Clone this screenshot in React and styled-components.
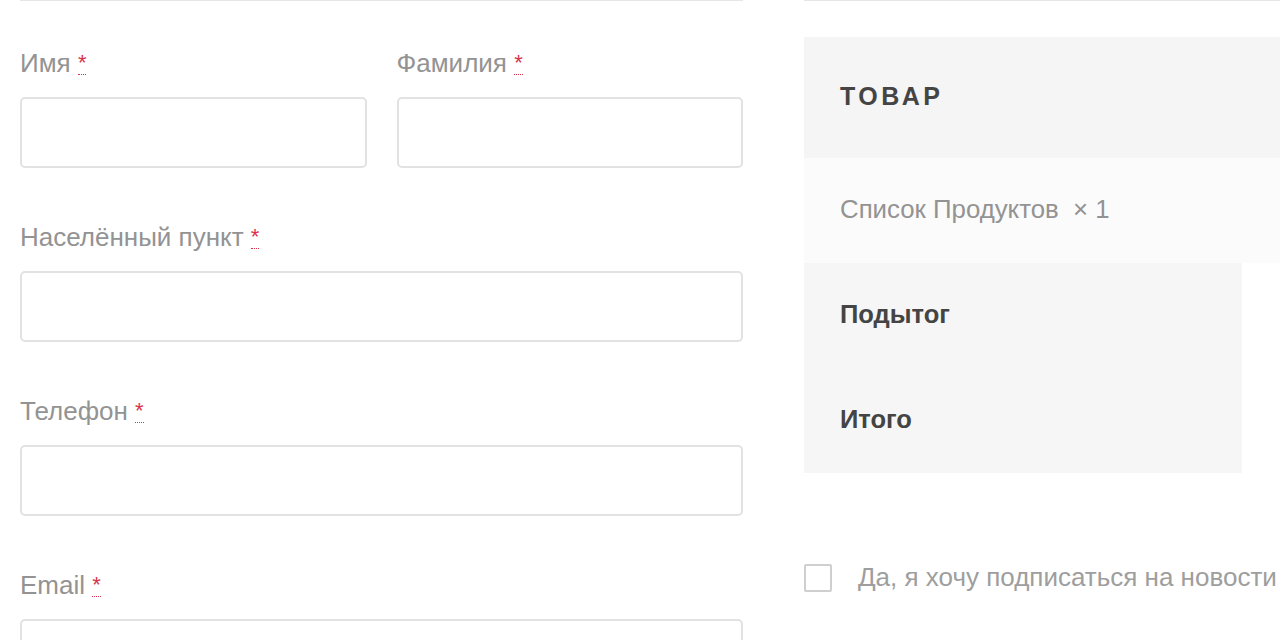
import React from 'react';
import styled, { createGlobalStyle } from 'styled-components';

const GlobalStyle = createGlobalStyle`
  html, body {
    margin: 0;
    padding: 0;
    background: #fff;
    overflow: hidden;
  }
  body {
    font-family: "Liberation Sans", Arial, sans-serif;
  }
`;

const Page = styled.div`
  display: flex;
  gap: 61px;
  padding-left: 20px;
  width: 1400px;
  height: 640px;
`;

const FormColumn = styled.section`
  width: 723px;
  flex-shrink: 0;
  border-top: 1px solid #e6e6e6;
  padding-top: 45px;
`;

const Row = styled.div`
  display: flex;
  gap: 30px;
`;

const Field = styled.div`
  flex: 1;
  margin-bottom: 52px;
`;

const Label = styled.label`
  display: block;
  height: 34px;
  font-size: 26px;
  line-height: 34px;
  color: #939393;
  margin-bottom: 17px;
  white-space: nowrap;
`;

const Required = styled.abbr`
  display: inline-block;
  line-height: 1;
  color: #d8334a;
  text-decoration: none;
  border-bottom: 1px dotted #d8334a;
  font-size: 22px;
  vertical-align: 2px;
`;

const Input = styled.input`
  display: block;
  box-sizing: border-box;
  width: 100%;
  height: 71px;
  border: 2px solid #e2e2e2;
  border-radius: 5px;
  background: #fff;
  outline: none;
`;

const OrderColumn = styled.section`
  width: 560px;
  flex-shrink: 0;
  border-top: 1px solid #e6e6e6;
  padding-top: 36px;
`;

const HeadRow = styled.div`
  height: 121px;
  display: flex;
  align-items: center;
  padding-left: 36px;
  padding-bottom: 3px;
  box-sizing: border-box;
  background: #f5f5f5;
  font-size: 25px;
  font-weight: 700;
  letter-spacing: 3.6px;
  color: #444;
`;

const ItemRow = styled.div`
  height: 105px;
  display: flex;
  align-items: center;
  padding-left: 36px;
  padding-bottom: 2px;
  box-sizing: border-box;
  background: #fbfbfb;
  font-size: 25.8px;
  color: #939393;
  white-space: pre;
`;

const Totals = styled.div`
  width: 438px;
  background: #f6f6f6;
`;

const TotalRow = styled.div`
  height: 105px;
  display: flex;
  align-items: center;
  padding-left: 36px;
  padding-bottom: 2px;
  box-sizing: border-box;
  font-size: 25.5px;
  font-weight: 700;
  color: #444;
`;

const Subscribe = styled.label`
  display: flex;
  align-items: center;
  gap: 26px;
  margin-top: 89px;
  font-size: 26px;
  color: #9e9e9e;
  white-space: nowrap;
`;

const Box = styled.span`
  display: block;
  box-sizing: border-box;
  width: 28px;
  height: 28px;
  border: 2px solid #cfcfcf;
  border-radius: 2px;
  background: #fff;
`;

function Star() {
  return <Required title="обязательно">*</Required>;
}

export default function App() {
  return (
    <>
      <GlobalStyle />
      <Page>
        <FormColumn>
          <Row>
            <Field>
              <Label>Имя <Star /></Label>
              <Input />
            </Field>
            <Field>
              <Label>Фамилия <Star /></Label>
              <Input />
            </Field>
          </Row>
          <Field>
            <Label>Населённый пункт <Star /></Label>
            <Input />
          </Field>
          <Field>
            <Label>Телефон <Star /></Label>
            <Input />
          </Field>
          <Field>
            <Label>Email <Star /></Label>
            <Input />
          </Field>
        </FormColumn>
        <OrderColumn>
          <HeadRow>ТОВАР</HeadRow>
          <ItemRow>{'Список Продуктов  × 1'}</ItemRow>
          <Totals>
            <TotalRow>Подытог</TotalRow>
            <TotalRow>Итого</TotalRow>
          </Totals>
          <Subscribe>
            <Box />
            Да, я хочу подписаться на новости
          </Subscribe>
        </OrderColumn>
      </Page>
    </>
  );
}
